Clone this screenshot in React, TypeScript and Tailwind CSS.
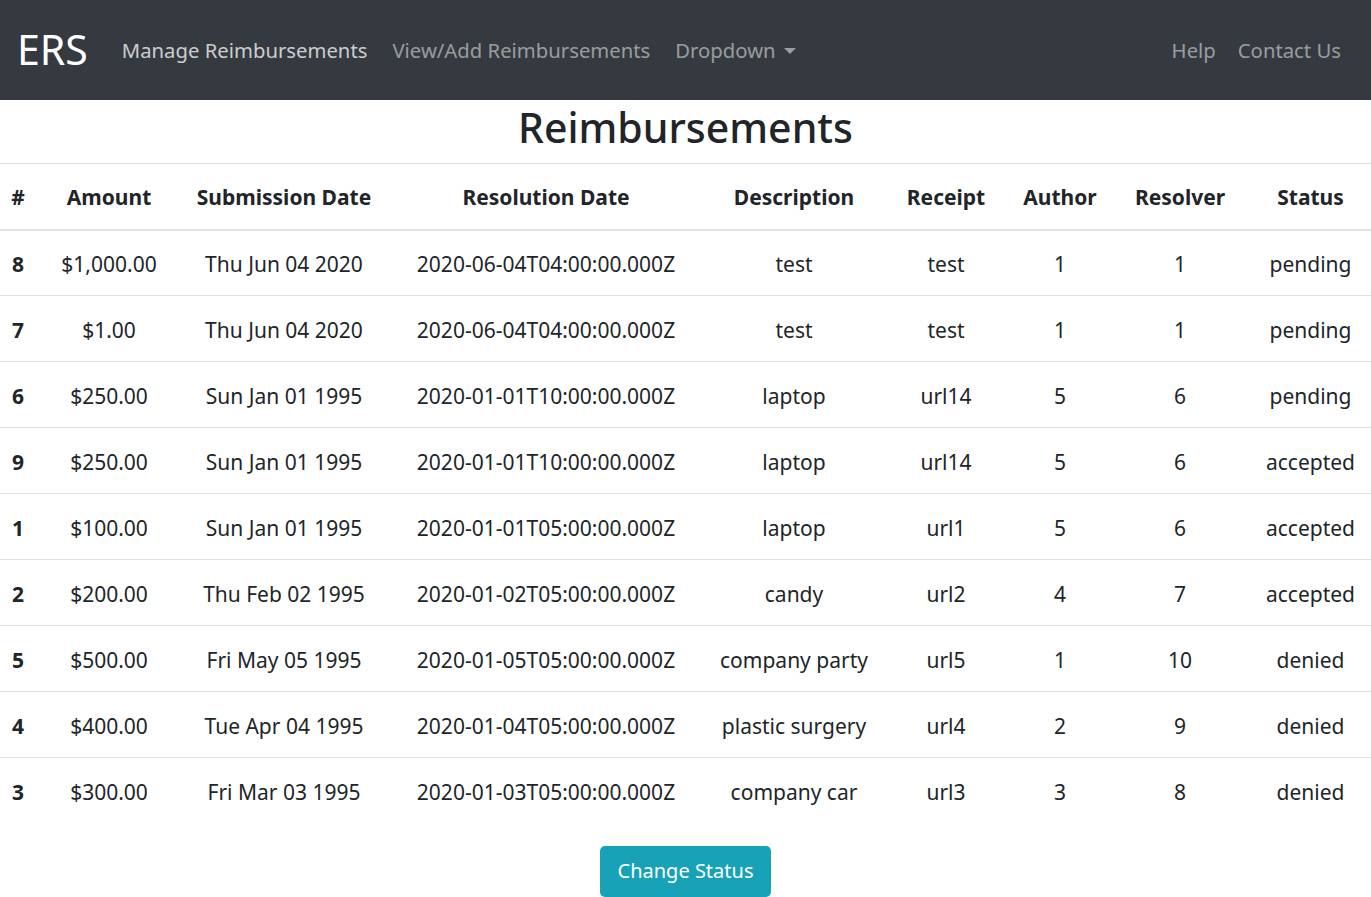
import React from "react";

const rows = [
  ["8", "$1,000.00", "Thu Jun 04 2020", "2020-06-04T04:00:00.000Z", "test", "test", "1", "1", "pending"],
  ["7", "$1.00", "Thu Jun 04 2020", "2020-06-04T04:00:00.000Z", "test", "test", "1", "1", "pending"],
  ["6", "$250.00", "Sun Jan 01 1995", "2020-01-01T10:00:00.000Z", "laptop", "url14", "5", "6", "pending"],
  ["9", "$250.00", "Sun Jan 01 1995", "2020-01-01T10:00:00.000Z", "laptop", "url14", "5", "6", "accepted"],
  ["1", "$100.00", "Sun Jan 01 1995", "2020-01-01T05:00:00.000Z", "laptop", "url1", "5", "6", "accepted"],
  ["2", "$200.00", "Thu Feb 02 1995", "2020-01-02T05:00:00.000Z", "candy", "url2", "4", "7", "accepted"],
  ["5", "$500.00", "Fri May 05 1995", "2020-01-05T05:00:00.000Z", "company party", "url5", "1", "10", "denied"],
  ["4", "$400.00", "Tue Apr 04 1995", "2020-01-04T05:00:00.000Z", "plastic surgery", "url4", "2", "9", "denied"],
  ["3", "$300.00", "Fri Mar 03 1995", "2020-01-03T05:00:00.000Z", "company car", "url3", "3", "8", "denied"],
];

const headers = ["#", "Amount", "Submission Date", "Resolution Date", "Description", "Receipt", "Author", "Resolver", "Status"];
const widths = ["w-[36px]", "w-[146px]", "w-[204px]", "w-[320px]", "w-[176px]", "w-[128px]", "w-[100px]", "w-[140px]", "w-[121px]"];

const App = () => {
  return (
    <div className="min-h-screen bg-white text-[#212529] font-['Segoe_UI','Noto_Sans',sans-serif]">
      <nav className="h-[100px] bg-[#343a40] flex items-center pl-[17px] pr-[18px]">
        <span className="text-white text-[41px] leading-none mr-[34px] -mt-[2px]">ERS</span>
        <div className="flex items-center gap-[25px] text-[20.3px]">
          <a href="#" className="text-white/75 no-underline">Manage Reimbursements</a>
          <a href="#" className="text-white/50 no-underline">View/Add Reimbursements</a>
          <a href="#" className="text-white/50 no-underline flex items-center">
            Dropdown
            <span className="ml-[8px] mt-[1px] w-0 h-0 border-l-[6px] border-r-[6px] border-t-[6px] border-l-transparent border-r-transparent border-t-white/50"></span>
          </a>
        </div>
        <div className="ml-auto flex items-center gap-[22px] text-[20.3px] pr-[12px]">
          <a href="#" className="text-white/50 no-underline">Help</a>
          <a href="#" className="text-white/50 no-underline">Contact Us</a>
        </div>
      </nav>

      <h1 className="text-center text-[41px] font-medium leading-[55px] pb-[8px]">Reimbursements</h1>

      <table className="w-full border-collapse table-fixed text-[21px] text-center">
        <thead>
          <tr className="border-t border-[#dee2e6]">
            {headers.map((h, i) => (
              <th key={h} className={`${widths[i]} h-[66px] pt-[2px] font-bold border-b-2 border-[#dee2e6] align-middle`}>
                {h}
              </th>
            ))}
          </tr>
        </thead>
        <tbody>
          {rows.map((r, ri) => (
            <tr key={ri} className={ri > 0 ? "border-t border-[#dee2e6]" : ""}>
              {r.map((c, ci) => (
                <td key={ci} className={`h-[66px] pt-[4px] align-middle ${ci === 0 ? "font-bold" : ""}`}>
                  {c}
                </td>
              ))}
            </tr>
          ))}
        </tbody>
      </table>

      <div className="flex justify-center pt-[22px]">
        <button className="bg-[#17a2b8] text-white text-[20px] h-[51px] px-[18px] rounded-[5px]">Change Status</button>
      </div>
    </div>
  );
};

export default App;
